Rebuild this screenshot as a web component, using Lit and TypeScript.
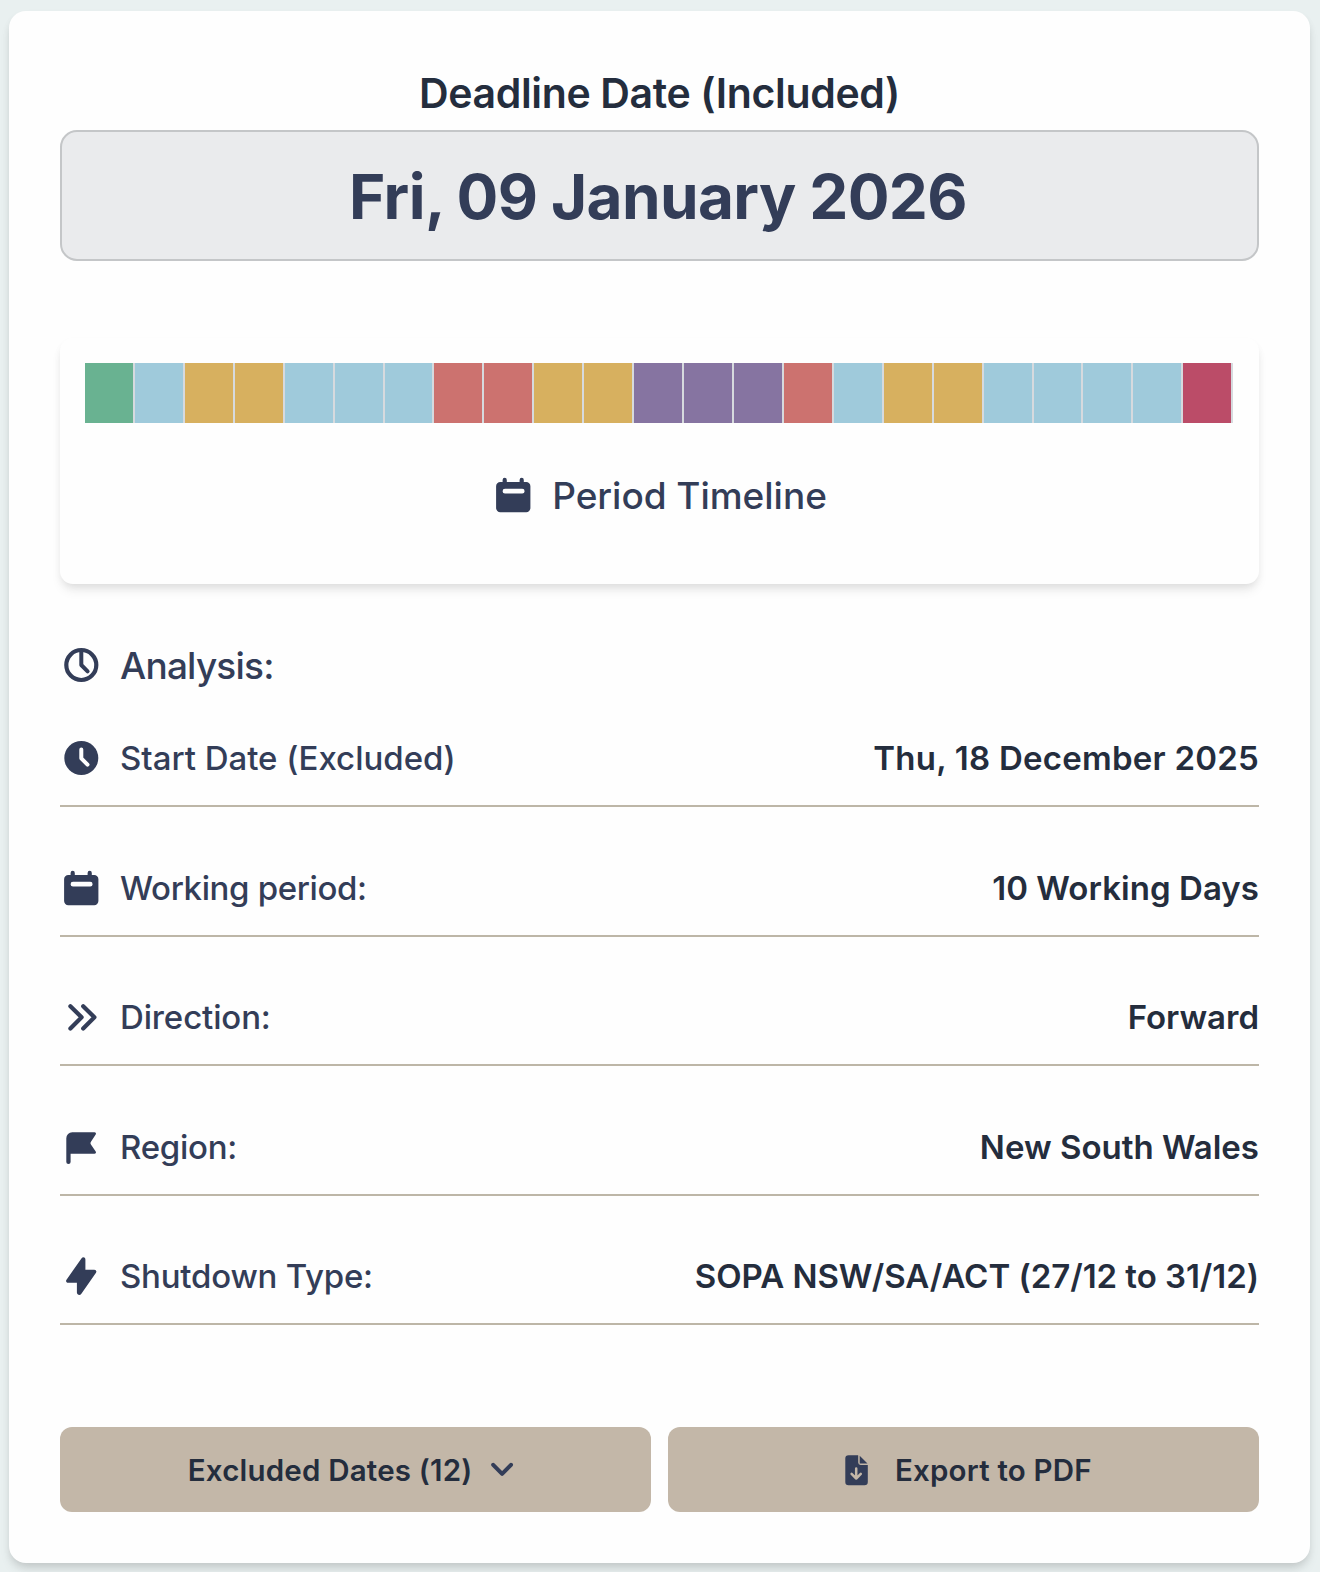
import { LitElement, html, css, svg } from "lit";
import { customElement } from "lit/decorators.js";
import { classMap } from "lit/directives/class-map.js";

type IconName = "clock" | "clockSolid" | "calendar" | "forward" | "flag" | "bolt" | "chevron" | "file";

const ICONS: Record<IconName, unknown> = {
  clock: svg`<circle cx="21.3" cy="21" r="15" fill="none" stroke="currentColor" stroke-width="4.2"/>
    <path d="M21.3 8v13l6.3 6.4" fill="none" stroke="currentColor" stroke-width="4" stroke-linecap="round" stroke-linejoin="round"/>`,
  clockSolid: svg`<circle cx="21.3" cy="21" r="17" fill="currentColor"/>
    <path d="M21.3 12.4v8.9l6.2 6.3" fill="none" stroke="#fff" stroke-width="4" stroke-linecap="round" stroke-linejoin="round"/>`,
  calendar: svg`<path fill="currentColor" fill-rule="evenodd" d="M8.3 8.1h2.3V5.9a2.1 2.1 0 0 1 4.2 0v2.2h12.8V5.9a2.1 2.1 0 0 1 4.2 0v2.2h2.4a4.2 4.2 0 0 1 4.2 4.2v21.8a4.2 4.2 0 0 1-4.2 4.2H8.3a4.2 4.2 0 0 1-4.2-4.2V12.3a4.2 4.2 0 0 1 4.2-4.2ZM13 14.8a2.4 2.4 0 0 0 0 4.8h17.2a2.4 2.4 0 0 0 0-4.8Z"/>`,
  forward: svg`<path d="m10.4 10.2 11.2 11.1-11.2 11.2M23.2 10.2l11.2 11.1-11.2 11.2" fill="none" stroke="currentColor" stroke-width="4.2" stroke-linecap="round" stroke-linejoin="round"/>`,
  flag: svg`<path fill="currentColor" d="M12.2 6.3h22.3c1.3 0 1.9 1.2 1.2 2.2l-4.6 6.9c-.8 1.2-.8 2.2 0 3.4l4.6 6.7c.7 1 .1 2.2-1.2 2.2H10.6v8.2a2.15 2.15 0 0 1-4.3 0V12.2a5.9 5.9 0 0 1 5.9-5.9Z"/>`,
  bolt: svg`<path fill="currentColor" d="M21.6 3.2c1.2-1.7 3.8-1 3.8 1.2v10.3h8.8c1.8 0 2.8 1.6 1.8 3.1L21.2 38.9c-1.2 1.8-4.3 1-4.3-1.4V27.7H8.2c-1.8 0-2.7-1.6-1.7-3Z"/>`,
  chevron: svg`<path d="m12.2 15.8 8.9 9.1 8.9-9.1" fill="none" stroke="currentColor" stroke-width="4" stroke-linecap="round" stroke-linejoin="round"/>`,
  file: svg`<path fill="currentColor" d="M13.6 6.3h9.6v7.3a2.4 2.4 0 0 0 2.4 2.4h7.2v17a3.3 3.3 0 0 1-3.3 3.3H13.6a3.3 3.3 0 0 1-3.3-3.3V9.6a3.3 3.3 0 0 1 3.3-3.3ZM24.7 6.8l7.8 7.8h-7.8Z"/>
    <path d="M21.2 19.6v9.8M16.6 24.9l4.6 4.6 4.6-4.6" fill="none" stroke="#c3b7a8" stroke-width="2.5" stroke-linecap="round" stroke-linejoin="round"/>`,
};

const icon = (name: IconName) => html`<svg class="icon" viewBox="0 0 42 42" aria-hidden="true">${ICONS[name]}</svg>`;

type DayKind = "start" | "working" | "weekend" | "holiday" | "shutdown" | "deadline";

const RUNS: [DayKind, number][] = [
  ["start", 1], ["working", 1], ["weekend", 2], ["working", 3], ["holiday", 2], ["weekend", 2],
  ["shutdown", 3], ["holiday", 1], ["working", 1], ["weekend", 2], ["working", 4], ["deadline", 1],
];
const DAYS: DayKind[] = RUNS.flatMap(([kind, n]) => Array<DayKind>(n).fill(kind));

interface Row { icon: IconName; label: string; value: string; key: string }
const ROWS: Row[] = [
  { key: "start", icon: "clockSolid", label: "Start Date (Excluded)", value: "Thu, 18 December 2025" },
  { key: "period", icon: "calendar", label: "Working period:", value: "10 Working Days" },
  { key: "direction", icon: "forward", label: "Direction:", value: "Forward" },
  { key: "region", icon: "flag", label: "Region:", value: "New South Wales" },
  { key: "shutdown", icon: "bolt", label: "Shutdown Type:", value: "SOPA NSW/SA/ACT (27/12 to 31/12)" },
];

@customElement("app-root")
export class AppRoot extends LitElement {
  static styles = css`
    :host {
      display: block;
      box-sizing: border-box;
      height: 1572px;
      padding: 11px 10px 9px 9px;
      overflow: hidden;
      background: #e9f0f0;
      color: #242d3d;
      font-family: Inter, "Liberation Sans", sans-serif;
      white-space: nowrap;
    }
    * { box-sizing: border-box; }
    .card {
      height: 1552px;
      padding: 58px 51px 51px;
      border-radius: 17px;
      background: #fefefe;
      box-shadow: 0 8px 12px -2px rgba(0, 0, 0, .1), 0 4px 8px -2px rgba(0, 0, 0, .1);
      display: flex;
      flex-direction: column;
    }
    .icon { width: 42px; height: 42px; flex: none; display: block; color: #333d58; }
    .heading {
      margin: 0;
      height: 61px;
      line-height: 48px;
      text-align: center;
      font-size: 41px;
      font-weight: 600;
      letter-spacing: -.35px;
    }
    .date {
      height: 131px;
      border: 2px solid #c4c6c8;
      border-radius: 17px;
      background: #eaebed;
      color: #333d58;
      display: flex;
      align-items: center;
      justify-content: center;
      font-size: 62px;
      font-weight: 700;
      letter-spacing: -.6px;
      word-spacing: -.6px;
      line-height: 84px;
      padding: 2px 3px 0 0;
    }
    .timeline {
      margin-top: 77px;
      height: 246px;
      padding: 25px;
      border-radius: 13px;
      background: #fefefe;
      box-shadow: 0 8px 12px -2px rgba(0, 0, 0, .08), 0 4px 8px -2px rgba(0, 0, 0, .08);
    }
    .days { display: flex; height: 60px; width: 1148.2px; }
    .day { flex: 1 1 0; border-right: 2px solid #d6dade; }
    .day.start { background: #69b291; }
    .day.working { background: #9fcadb; }
    .day.weekend { background: #d7b05f; }
    .day.holiday { background: #cc726f; }
    .day.shutdown { background: #8674a1; }
    .day.deadline { background: #bb4c68; }
    .title {
      display: flex;
      align-items: center;
      gap: 18px;
      height: 42px;
      font-size: 37px;
      font-weight: 500;
      color: #333d58;
    }
    .timeline .title { margin-top: 51px; justify-content: center; letter-spacing: -.03px; }
    .analysis { margin-top: 60px; letter-spacing: -.8px; }
    .rows { margin-top: -8.5px; }
    .row {
      height: 129.5px;
      padding-bottom: 26px;
      border-bottom: 2px solid #bdb6a7;
      display: flex;
      align-items: flex-end;
      justify-content: space-between;
      font-size: 33px;
      line-height: 42px;
    }
    .label { display: flex; gap: 18px; color: #333d58; font-weight: 500; }
    .label span, .value { height: 42px; line-height: 43.8px; }
    .value { font-weight: 600; }
    .start .label { letter-spacing: -.02px; }
    .start .value { letter-spacing: .24px; }
    .period .label { letter-spacing: -.36px; }
    .period .value { letter-spacing: .052px; }
    .direction .label { letter-spacing: -.13px; }
    .region .label { letter-spacing: -.27px; }
    .shutdown .label { letter-spacing: -.22px; }
    .shutdown .value { letter-spacing: -.04px; }
    .actions { margin-top: 102px; display: grid; grid-template-columns: 1fr 1fr; gap: 17.5px; }
    .button {
      height: 85px;
      padding: 0;
      border: 0;
      border-radius: 12px;
      background: #c3b7a8;
      color: #242d3d;
      display: flex;
      align-items: center;
      justify-content: center;
      font: 600 29.5px/42px Inter, "Liberation Sans", sans-serif;
      letter-spacing: .2px;
    }
    .button span { padding-top: 1.5px; }
    .toggle { gap: 8.5px; }
    .export { gap: 17.5px; }
  `;

  private renderRow(row: Row) {
    return html`<div class=${classMap({ row: true, [row.key]: true })}>
      <div class="label">${icon(row.icon)}<span>${row.label}</span></div>
      <div class="value">${row.value}</div>
    </div>`;
  }

  render() {
    return html`<main class="card">
      <h2 class="heading">Deadline Date (Included)</h2>
      <div class="date">Fri, 09 January 2026</div>
      <section class="timeline">
        <div class="days">${DAYS.map((d) => html`<div class=${classMap({ day: true, [d]: true })}></div>`)}</div>
        <div class="title">${icon("calendar")}<span>Period Timeline</span></div>
      </section>
      <div class="title analysis">${icon("clock")}<span>Analysis:</span></div>
      <div class="rows">${ROWS.map((r) => this.renderRow(r))}</div>
      <div class="actions">
        <button class="button toggle"><span>Excluded Dates (12)</span>${icon("chevron")}</button>
        <button class="button export">${icon("file")}<span>Export to PDF</span></button>
      </div>
    </main>`;
  }
}
